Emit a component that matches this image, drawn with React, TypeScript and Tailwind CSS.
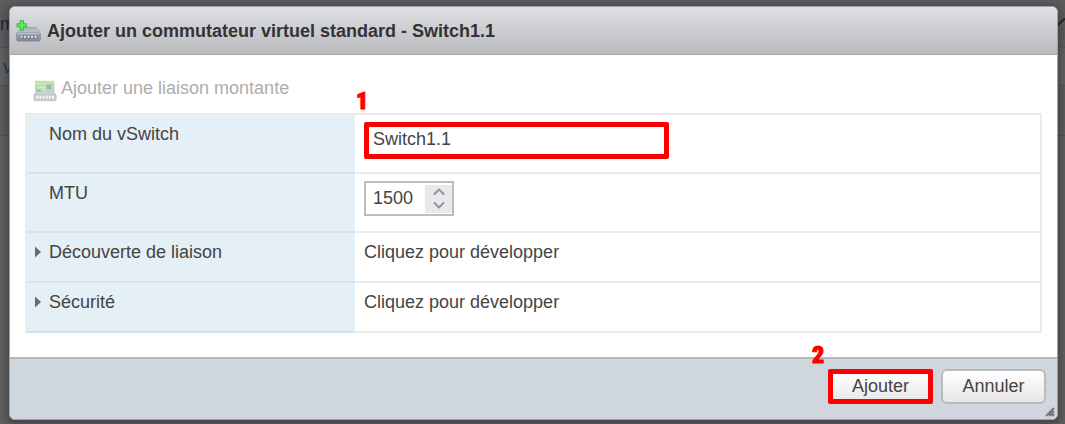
import { ReactNode, useState } from "react";

type ExpandableRow = {
  id: string;
  label: string;
};

const expandableRows: ExpandableRow[] = [
  { id: "discovery", label: "Découverte de liaison" },
  { id: "security", label: "Sécurité" },
];

function SwitchIcon() {
  return (
    <svg width="25" height="22" viewBox="0 0 25 22" aria-hidden="true" className="shrink-0">
      <defs>
        <linearGradient id="switchTop" x1="0" y1="0" x2="0" y2="1">
          <stop offset="0" stopColor="#a9b4bf" />
          <stop offset="1" stopColor="#bcc5ce" />
        </linearGradient>
        <linearGradient id="switchFront" x1="0" y1="0" x2="0" y2="1">
          <stop offset="0" stopColor="#a3adb8" />
          <stop offset="1" stopColor="#7f8a97" />
        </linearGradient>
      </defs>
      <path d="M5.5 7.5h14.2q1.2 0 1.7 1l2.6 4.7H.8z" fill="url(#switchTop)" stroke="#8e99a4" strokeWidth=".7" />
      <rect x=".7" y="12.5" width="23.6" height="8.6" rx="1.5" fill="url(#switchFront)" stroke="#75808c" strokeWidth=".7" />
      <path d="M1.2 13.1h22.6" stroke="#d7dde3" strokeWidth=".8" />
      <path d="M3.5 15.2h18v3.2h-18z" fill="#6d7884" />
      <path d="M4.5 15.8h2v2h-2zM8 15.8h2v2H8zM11.5 15.8h2v2h-2zM15 15.8h2v2h-2zM18.5 15.8h2v2h-2z" fill="#eef1f4" />
      <path d="M4.2.6h3.2v3.2h3.2V7H7.4v3.2H4.2V7H1V3.8h3.2z" fill="#62ea5c" stroke="#2fb53b" strokeWidth=".9" />
    </svg>
  );
}

function UplinkIcon() {
  return (
    <svg width="24" height="22" viewBox="0 0 24 22" aria-hidden="true" className="mt-1.5 shrink-0">
      <path d="M2.5 1.2h18.5v12.5H2.5z" fill="#b5e0b6" stroke="#a4cda6" strokeWidth=".6" />
      <path d="M3 2h6v3H3zM13 1.6h7v1.6h-7z" fill="#cfe6a4" />
      <path d="M10 3.5h1.5v4H6v2h5.5v-2H14" fill="none" stroke="#dcecab" strokeWidth="1" />
      <rect x="13" y="4.2" width="5.5" height="5.5" fill="#9fb6ab" stroke="#c8d7c9" strokeWidth=".7" />
      <path d="M4 9.5h4v2.5H4z" fill="#91cc95" />
      <path d="M2.4 12.3h19.2l1.2 3H1.2z" fill="#d2d7dc" stroke="#c3c8ce" strokeWidth=".6" />
      <rect x=".8" y="14.3" width="22.4" height="6.4" rx="1.2" fill="#c9ced4" stroke="#b7bdc5" strokeWidth=".7" />
      <path d="M3.5 15.8h1.8v2.8H3.5zM6.6 15.8h1.8v2.8H6.6zM9.7 15.8h1.8v2.8H9.7zM12.8 15.8h1.8v2.8h-1.8zM15.9 15.8h1.8v2.8h-1.8zM19 15.8h1.8v2.8H19z" fill="#f7f8f9" />
    </svg>
  );
}

function StepNumber({ children, className }: { children: ReactNode; className: string }) {
  return (
    <span
      className={`absolute font-['Liberation_Sans_Narrow','Roboto_Condensed','Roboto',sans-serif] text-2xl leading-6 font-black text-[#ff0000] [-webkit-text-stroke:1px_#ff0000] ${className}`}
    >
      {children}
    </span>
  );
}

function FormRow({ label, children }: { label: ReactNode; children: ReactNode }) {
  return (
    <div className="flex">
      <div className="w-[328px] shrink-0 border-b-2 border-black/5 bg-[#e4eff6] pt-[7px] pl-2">{label}</div>
      <div className="min-w-0 flex-1 border-b-2 border-black/8 pt-[7px] pl-[9px]">{children}</div>
    </div>
  );
}

// page that stays visible behind the dialog
function Backdrop() {
  return (
    <div aria-hidden="true" className="col-start-1 row-start-1 overflow-hidden bg-[#5f5f5f] text-lg leading-6">
      <div className="flex h-12 items-center justify-between border-b border-[#535353] bg-[#5b5c5e] text-[#252628]">
        <span>m</span>
        <svg width="7" height="8" viewBox="0 0 7 8" className="mb-1">
          <path d="M0 7 5 2q1-1 2-1" fill="none" stroke="#292929" strokeWidth="2" />
        </svg>
      </div>
      <div className="flex h-9.5 items-center border-b border-[#535353] bg-[#606163] pl-[3px] text-[#213c58]">v</div>
      <div className="h-12.5 border-b border-[#505152] bg-[#5b5c5e]" />
    </div>
  );
}

export default function App() {
  const [name, setName] = useState("Switch1.1");
  const [mtu, setMtu] = useState(1500);
  const [opened, setOpened] = useState<string[]>([]);

  const toggleRow = (id: string) => {
    setOpened(opened.includes(id) ? opened.filter((item) => item !== id) : [...opened, id]);
  };

  return (
    <div className="grid min-h-screen font-['Liberation_Sans',Arial,sans-serif] text-lg leading-6 text-[#444444]">
      <Backdrop />
      <div
        role="dialog"
        aria-labelledby="dialog-title"
        className="relative col-start-1 row-start-1 mt-1.5 mr-[7px] mb-1 ml-[9px] self-start overflow-hidden rounded-md border border-[#a0a1a3] bg-white shadow-[0_2px_8px_2px_rgba(0,0,0,0.3)]"
      >
        <header className="flex h-12 items-center gap-1.5 border-b border-[#a3a4a7] bg-linear-to-b from-[#dfe0e4] to-[#b9babe] pl-1.5">
          <SwitchIcon />
          <h1 id="dialog-title" className="font-bold text-[#333333]">
            Ajouter un commutateur virtuel standard - Switch1.1
          </h1>
        </header>

        <form onSubmit={(e) => e.preventDefault()}>
          <div className="px-[15px] pt-[21px] pb-6">
            <button type="button" disabled className="ml-2 flex h-6 items-center gap-1 text-[#adadad]">
              <UplinkIcon />
              Ajouter une liaison montante
            </button>

            <div className="relative mt-[13px] border-x-2 border-t-2 border-[#ebebeb]">
              <StepNumber className="-top-[26px] left-[329px]">1</StepNumber>
              <FormRow label={<label htmlFor="name" className="ml-3.5">Nom du vSwitch</label>}>
                <div className="h-[50px]">
                  <input
                    id="name"
                    type="text"
                    value={name}
                    onChange={(e) => setName(e.target.value)}
                    className="block h-[37px] w-[305px] rounded-xs border-5 border-[#ff0000] bg-white px-1 pb-0.5 outline-none"
                  />
                </div>
              </FormRow>
              <FormRow label={<label htmlFor="mtu" className="ml-3.5">MTU</label>}>
                <div className="h-[50px]">
                  <div className="flex h-[35px] w-[90px] items-center border-2 border-[#bdbdbd] bg-white pl-[7px]">
                    <input
                      id="mtu"
                      type="number"
                      value={mtu}
                      onChange={(e) => setMtu(Number(e.target.value))}
                      className="w-0 flex-1 appearance-none pb-0.5 outline-none [-moz-appearance:textfield] [&::-webkit-inner-spin-button]:appearance-none"
                    />
                    <div className="flex h-7 w-[27px] flex-col bg-[#e9e9ed]">
                      <button type="button" aria-label="Augmenter" onClick={() => setMtu(mtu + 1)} className="flex flex-1 items-center justify-center">
                        <svg width="12" height="7" viewBox="0 0 12 7">
                          <path d="M1.5 6 6 1.5 10.5 6" fill="none" stroke="#93939d" strokeWidth="2" strokeLinecap="round" strokeLinejoin="round" />
                        </svg>
                      </button>
                      <button type="button" aria-label="Diminuer" onClick={() => setMtu(mtu - 1)} className="flex flex-1 items-center justify-center">
                        <svg width="12" height="7" viewBox="0 0 12 7">
                          <path d="M1.5 1 6 5.5 10.5 1" fill="none" stroke="#93939d" strokeWidth="2" strokeLinecap="round" strokeLinejoin="round" />
                        </svg>
                      </button>
                    </div>
                  </div>
                </div>
              </FormRow>
              {expandableRows.map((row) => (
                <FormRow
                  key={row.id}
                  label={
                    <button
                      type="button"
                      aria-expanded={opened.includes(row.id)}
                      onClick={() => toggleRow(row.id)}
                      className="flex items-center gap-2"
                    >
                      <svg width="6" height="12" viewBox="0 0 6 12" className={opened.includes(row.id) ? "rotate-90" : ""}>
                        <path d="M0 .5 6 6 0 11.5z" fill="#6b6b6b" />
                      </svg>
                      {row.label}
                    </button>
                  }
                >
                  <p className="h-[41px]">Cliquez pour développer</p>
                </FormRow>
              ))}
            </div>
          </div>

          <footer className="relative flex h-[62px] items-start justify-end gap-2 border-t-2 border-[#b4b7bb] bg-[#d0d6de] pt-2.5 pr-[11px]">
            <div className="relative">
              <StepNumber className="-top-[26px] -left-4">2</StepNumber>
              <button type="submit" className="block h-[35px] w-[105px] rounded-xs border-5 border-[#ff0000] bg-linear-to-b from-white to-[#e9e9e9] pb-0.5">
                Ajouter
              </button>
            </div>
            <button type="button" className="h-[35px] w-[105px] rounded-md border-2 border-[#b9babc] bg-linear-to-b from-white to-[#e6e6e6] pb-0.5">
              Annuler
            </button>
            <svg width="10" height="10" viewBox="0 0 10 10" aria-hidden="true" className="absolute right-0.5 bottom-0.5">
              <path d="M1 9 9 1M4 9l5-5M7 9l2-2" stroke="#74787e" strokeWidth="2" />
            </svg>
          </footer>
        </form>
      </div>
    </div>
  );
}
